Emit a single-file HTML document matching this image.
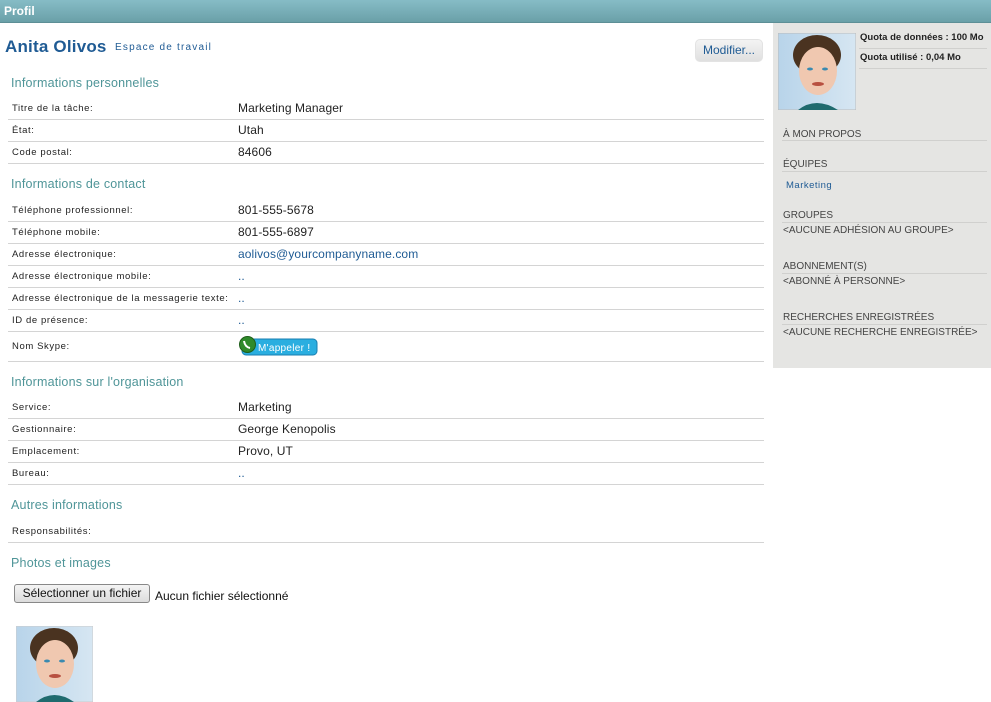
<!DOCTYPE html>
<html><head><meta charset="utf-8"><style>
*{margin:0;padding:0;box-sizing:border-box}
body{width:991px;height:702px;position:relative;background:#fff;font-family:"Liberation Sans",Arial,sans-serif;overflow:hidden}
.a{position:absolute;white-space:nowrap}
.hdr{left:0;top:0;width:991px;height:23px;background:linear-gradient(#86bcc6,#6aa0a8);border-bottom:1px solid #5d8f96}
.hdr span{position:absolute;left:4px;top:4px;color:#fff;font-weight:bold;font-size:12px}
.sec{font-size:12.5px;color:#4f9598;letter-spacing:0.2px}
.lbl{font-size:9.5px;color:#222;letter-spacing:0.6px;left:12px}
.val{font-size:12px;color:#222;letter-spacing:0.1px;left:238px}
.dots{font-size:12px;color:#1f5b94;left:238px}
.lnk{color:#1f5b94}
.ln{left:8px;width:756px;height:1px;background:#d4d4d4}
.rp{left:773px;top:23px;width:218px;height:345px;background:#e5e5e3}
.rt{font-size:10px;color:#444;left:783px}
.rl{left:782px;width:205px;height:1px;background:#d0d0ce}
</style></head><body>
<div class="a hdr"><span>Profil</span></div>

<div class="a" style="left:5px;top:37px;font-size:17px;font-weight:bold;color:#1f5b94;letter-spacing:0.2px">Anita Olivos</div>
<div class="a" style="left:115px;top:42px;font-size:10px;color:#1f5b94;letter-spacing:1.2px">Espace de travail</div>
<div class="a" style="left:695px;top:39px;width:68px;height:23px;border-radius:5px;background:linear-gradient(#f3f3f3,#e0e0e0);border:1px solid #e3e3e3;font-size:12px;color:#1f5b94;text-align:center;line-height:21px">Modifier...</div>

<div class="a sec" style="left:11px;top:76px">Informations personnelles</div>
<div class="a lbl" style="top:103px">Titre de la tâche:</div><div class="a val" style="top:101px">Marketing Manager</div>
<div class="a ln" style="top:119px"></div>
<div class="a lbl" style="top:125px">État:</div><div class="a val" style="top:123px">Utah</div>
<div class="a ln" style="top:141px"></div>
<div class="a lbl" style="top:147px">Code postal:</div><div class="a val" style="top:145px">84606</div>
<div class="a ln" style="top:163px"></div>

<div class="a sec" style="left:11px;top:177px">Informations de contact</div>
<div class="a lbl" style="top:205px">Téléphone professionnel:</div><div class="a val" style="top:203px">801-555-5678</div>
<div class="a ln" style="top:221px"></div>
<div class="a lbl" style="top:227px">Téléphone mobile:</div><div class="a val" style="top:225px">801-555-6897</div>
<div class="a ln" style="top:243px"></div>
<div class="a lbl" style="top:249px">Adresse électronique:</div><div class="a val lnk" style="top:247px">aolivos@yourcompanyname.com</div>
<div class="a ln" style="top:265px"></div>
<div class="a lbl" style="top:271px">Adresse électronique mobile:</div><div class="a dots" style="top:269px">..</div>
<div class="a ln" style="top:287px"></div>
<div class="a lbl" style="top:293px">Adresse électronique de la messagerie texte:</div><div class="a dots" style="top:291px">..</div>
<div class="a ln" style="top:309px"></div>
<div class="a lbl" style="top:315px">ID de présence:</div><div class="a dots" style="top:313px">..</div>
<div class="a ln" style="top:331px"></div>
<div class="a lbl" style="top:341px">Nom Skype:</div>
<div class="a" style="left:239px;top:336px;width:80px;height:20px">
<svg width="80" height="20"><rect x="3" y="3" width="75" height="16" rx="4" fill="#2aaee0" stroke="#1a7fb0"/><circle cx="8.5" cy="8.5" r="8" fill="#2f8a2a" stroke="#1e5e1a"/><path d="M5 5 q1 6 6 7" stroke="#fff" stroke-width="2" fill="none"/><text x="19" y="15" font-family="Liberation Sans" font-size="10" fill="#fff" letter-spacing="0.3">M'appeler !</text></svg></div>
<div class="a ln" style="top:361px"></div>

<div class="a sec" style="left:11px;top:375px">Informations sur l'organisation</div>
<div class="a lbl" style="top:402px">Service:</div><div class="a val" style="top:400px">Marketing</div>
<div class="a ln" style="top:418px"></div>
<div class="a lbl" style="top:424px">Gestionnaire:</div><div class="a val" style="top:422px">George Kenopolis</div>
<div class="a ln" style="top:440px"></div>
<div class="a lbl" style="top:446px">Emplacement:</div><div class="a val" style="top:444px">Provo, UT</div>
<div class="a ln" style="top:462px"></div>
<div class="a lbl" style="top:468px">Bureau:</div><div class="a dots" style="top:466px">..</div>
<div class="a ln" style="top:484px"></div>

<div class="a sec" style="left:11px;top:498px">Autres informations</div>
<div class="a lbl" style="top:526px">Responsabilités:</div>
<div class="a ln" style="top:542px"></div>

<div class="a sec" style="left:11px;top:556px">Photos et images</div>
<div class="a" style="left:14px;top:584px;width:136px;height:19px;border:1px solid #888;border-radius:3px;background:linear-gradient(#f4f4f4,#dcdcdc);font-size:12px;color:#111;text-align:center;line-height:17px">Sélectionner un fichier</div>
<div class="a" style="left:155px;top:589px;font-size:12px;color:#111">Aucun fichier sélectionné</div>

<svg class="a" style="left:16px;top:626px" width="77" height="76"><defs><linearGradient id="bg1" x1="0" x2="1"><stop offset="0" stop-color="#b8d4ea"/><stop offset="1" stop-color="#d6e6f2"/></linearGradient></defs><rect width="77" height="76" fill="url(#bg1)" stroke="#ccc"/><ellipse cx="38" cy="22" rx="24" ry="20" fill="#4a3320"/><ellipse cx="39" cy="38" rx="19" ry="24" fill="#f0c8b0"/><path d="M20 76 q18-14 38 0z" fill="#1f6a6e"/><ellipse cx="31" cy="35" rx="3" ry="1.5" fill="#3a8ab0"/><ellipse cx="46" cy="35" rx="3" ry="1.5" fill="#3a8ab0"/><ellipse cx="39" cy="50" rx="6" ry="2" fill="#b85040"/></svg>

<div class="a rp"></div>
<svg class="a" style="left:778px;top:33px" width="78" height="77"><rect width="78" height="77" fill="url(#bg1)" stroke="#bbb"/><ellipse cx="39" cy="22" rx="24" ry="20" fill="#4a3320"/><ellipse cx="40" cy="38" rx="19" ry="24" fill="#f0c8b0"/><path d="M20 77 q18-14 40 0z" fill="#1f6a6e"/><ellipse cx="32" cy="36" rx="3" ry="1.5" fill="#3a8ab0"/><ellipse cx="47" cy="36" rx="3" ry="1.5" fill="#3a8ab0"/><ellipse cx="40" cy="51" rx="6" ry="2" fill="#b85040"/></svg>
<div class="a" style="left:860px;top:32px;font-size:9.5px;font-weight:bold;color:#222">Quota de données : 100 Mo</div>
<div class="a" style="left:859px;top:48px;width:128px;height:1px;background:#d0d0ce"></div>
<div class="a" style="left:860px;top:52px;font-size:9.5px;font-weight:bold;color:#222">Quota utilisé : 0,04 Mo</div>
<div class="a" style="left:859px;top:68px;width:128px;height:1px;background:#d0d0ce"></div>

<div class="a rt" style="top:129px">À MON PROPOS</div><div class="a rl" style="top:140px"></div>
<div class="a rt" style="top:159px">ÉQUIPES</div><div class="a rl" style="top:171px"></div>
<div class="a" style="left:786px;top:180px;font-size:9.5px;color:#1f5b94;letter-spacing:0.5px">Marketing</div>
<div class="a rt" style="top:210px">GROUPES</div><div class="a rl" style="top:222px"></div>
<div class="a rt" style="top:225px">&lt;AUCUNE ADHÉSION AU GROUPE&gt;</div>
<div class="a rt" style="top:261px">ABONNEMENT(S)</div><div class="a rl" style="top:273px"></div>
<div class="a rt" style="top:276px">&lt;ABONNÉ À PERSONNE&gt;</div>
<div class="a rt" style="top:312px">RECHERCHES ENREGISTRÉES</div><div class="a rl" style="top:324px"></div>
<div class="a rt" style="top:327px">&lt;AUCUNE RECHERCHE ENREGISTRÉE&gt;</div>
</body></html>
